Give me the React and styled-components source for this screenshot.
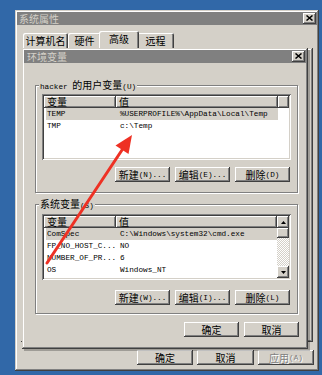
import React from "react";
import styled, { createGlobalStyle } from "styled-components";

const face = "#d4d0c8";
const cjk = `"Noto Sans CJK SC", sans-serif`;
const mono = `"Liberation Mono", "Noto Sans CJK SC", monospace`;

const raisedWindow = `
  box-shadow: inset -1px -1px #404040, inset 1px 1px ${face},
    inset -2px -2px #808080, inset 2px 2px #ffffff;
`;
const raisedButton = `
  box-shadow: inset -1px -1px #404040, inset 1px 1px #ffffff,
    inset -2px -2px #808080;
`;

const GlobalStyle = createGlobalStyle`
  * { box-sizing: border-box; }
  html, body { margin: 0; padding: 0; }
  body {
    background: #3168a8;
    width: 322px;
    height: 375px;
    overflow: hidden;
    font-family: ${mono};
  }
`;

const Desktop = styled.div`
  position: relative;
  width: 322px;
  height: 375px;
  padding: 10px 3px 4px 15px;
`;

const Window = styled.div`
  width: 304px;
  height: 361px;
  background: ${face};
  padding: 2px;
  ${raisedWindow}
  display: flex;
  flex-direction: column;
`;

const TitleBar = styled.div`
  flex-shrink: 0;
  height: 13px;
  background: #808080;
  display: flex;
  align-items: center;
  justify-content: space-between;
  padding: 0 ${(p) => p.$padRight || 1}px 0 ${(p) => p.$padLeft || 2}px;
`;

const Title = styled.span`
  font-family: ${cjk};
  font-size: 10px;
  line-height: 13px;
  color: ${face};
`;

const CloseBtn = styled.div`
  width: 13px;
  height: 11px;
  background: ${face};
  ${raisedButton}
  display: flex;
  align-items: center;
  justify-content: center;
  padding: 0 1px 1px 0;
`;

const TabStrip = styled.div`
  flex-shrink: 0;
  display: flex;
  align-items: flex-end;
  height: 17px;
  margin-top: 6px;
  padding-left: 6px;
  position: relative;
  z-index: 1;
`;

const Tab = styled.div`
  width: ${(p) => (p.$active ? p.$w + 4 : p.$w)}px;
  height: ${(p) => (p.$active ? 18 : 15)}px;
  margin: 0 ${(p) => (p.$active ? -2 : 0)}px
    ${(p) => (p.$active ? -1 : 0)}px;
  position: relative;
  z-index: ${(p) => (p.$active ? 2 : 1)};
  background: ${face};
  border-radius: 2px 2px 0 0;
  box-shadow: inset 1px 1px #ffffff, inset -1px 0 #404040,
    inset -2px 0 #808080;
  font-family: ${cjk};
  font-size: 10px;
  line-height: 15px;
  text-align: center;
  color: #000;
`;

const TabPanel = styled.div`
  flex: 1;
  margin: 0 4px;
  background: ${face};
  ${raisedWindow}
`;

const ButtonRow = styled.div`
  flex-shrink: 0;
  display: flex;
  justify-content: flex-end;
  gap: ${(p) => p.$gap || 5}px;
  margin: ${(p) => p.$margin || "0"};
`;

const Button = styled.button`
  width: ${(p) => p.$w || 55}px;
  height: 15px;
  border: none;
  padding: 0;
  background: ${face};
  ${raisedButton}
  display: flex;
  align-items: center;
  justify-content: center;
  font-family: ${mono};
  font-size: 7.7px;
  color: ${(p) => (p.$disabled ? "#808080" : "#000")};
  text-shadow: ${(p) => (p.$disabled ? "1px 1px #ffffff" : "none")};
`;

const Zh = styled.span`
  font-family: ${cjk};
  font-size: 10px;
  line-height: 10px;
`;

const EnvDialog = styled.div`
  position: absolute;
  left: 22px;
  top: 48px;
  width: 286px;
  height: 301px;
  background: ${face};
  padding: 2px;
  box-shadow: inset -1px -1px #404040, inset 1px 1px ${face},
    inset -2px -2px #808080, inset 2px 2px #ffffff,
    2px 2px 0 rgba(0, 0, 0, 0.25);
  display: flex;
  flex-direction: column;
  z-index: 5;
`;

const Group = styled.div`
  flex-shrink: 0;
  display: flex;
  flex-direction: column;
  margin: ${(p) => p.$top}px 8px 0 11px;
  padding: 0 6px ${(p) => p.$bottom}px;
  border: 1px solid #808080;
  box-shadow: inset 1px 1px #ffffff, 1px 1px #ffffff;
`;

const GroupLabel = styled.div`
  align-self: flex-start;
  height: 11px;
  margin: -6px 0 0 -3px;
  padding: 0 1px;
  background: ${face};
  font-family: ${mono};
  font-size: 7.7px;
  line-height: 11px;
  white-space: nowrap;
`;

const ListBox = styled.div`
  height: 66px;
  margin: ${(p) => p.$top}px 0 ${(p) => p.$bottom}px;
  background: #ffffff;
  padding: 2px;
  box-shadow: inset 1px 1px #808080, inset -1px -1px #ffffff,
    inset 2px 2px #404040, inset -2px -2px ${face};
  display: flex;
`;

const ListBody = styled.div`
  flex: 1;
  min-width: 0;
  display: flex;
  flex-direction: column;
`;

const HeaderRow = styled.div`
  display: flex;
  height: 12px;
`;

const HeaderCell = styled.div`
  width: ${(p) => (p.$w ? `${p.$w}px` : "auto")};
  flex: ${(p) => (p.$w ? "none" : 1)};
  display: flex;
  align-items: center;
  background: ${face};
  ${raisedButton}
  padding-left: 3px;
  white-space: nowrap;
`;

const Row = styled.div`
  display: flex;
  width: 232px;
  height: 12px;
  margin-left: 2px;
  background: ${(p) => (p.$selected ? face : "transparent")};
  font-family: ${mono};
  font-size: 7.7px;
  line-height: 12px;
  color: #000;
  white-space: nowrap;
`;

const Cell = styled.div`
  width: ${(p) => (p.$w ? `${p.$w}px` : "auto")};
  flex: ${(p) => (p.$w ? "none" : 1)};
  padding-left: ${(p) => p.$pad}px;
  overflow: hidden;
`;

const ScrollBar = styled.div`
  width: 12px;
  display: flex;
  flex-direction: column;
  background: repeating-conic-gradient(#ffffff 0 25%, ${face} 0 50%) 0 0 /
    2px 2px;
`;

const ScrollBtn = styled.div`
  height: ${(p) => p.$h || 12}px;
  background: ${face};
  ${raisedButton}
  display: flex;
  align-items: center;
  justify-content: center;
`;

const Track = styled.div`
  flex: 1;
`;

const Overlay = styled.svg`
  position: absolute;
  left: 0;
  top: 0;
  pointer-events: none;
  z-index: 10;
`;

const CloseGlyph = () => (
  <svg width="7" height="6" viewBox="0 0 7 6">
    <path d="M0.5 0.5 L6.5 5.5 M6.5 0.5 L0.5 5.5" stroke="#000" strokeWidth="1.5" />
  </svg>
);

const Arrow = ({ up }) => (
  <svg width="5" height="3" viewBox="0 0 5 3">
    <path d={up ? "M2.5 0 L5 3 L0 3 Z" : "M0 0 L5 0 L2.5 3 Z"} fill="#000" />
  </svg>
);

const userVars = [
  ["TEMP", "%USERPROFILE%\\AppData\\Local\\Temp"],
  ["TMP", "c:\\Temp"],
];

const systemVars = [
  ["ComSpec", "C:\\Windows\\system32\\cmd.exe"],
  ["FP_NO_HOST_C...", "NO"],
  ["NUMBER_OF_PR...", "6"],
  ["OS", "Windows_NT"],
];

const VarList = ({ rows, scroll, top, bottom }) => (
  <ListBox $top={top} $bottom={bottom}>
    <ListBody>
      <HeaderRow>
        <HeaderCell $w={72}>
          <Zh>变量</Zh>
        </HeaderCell>
        <HeaderCell $w={scroll ? 0 : 162}>
          <Zh>值</Zh>
        </HeaderCell>
        {!scroll && <HeaderCell />}
      </HeaderRow>
      {rows.map(([name, value], i) => (
        <Row key={name} $selected={i === 0}>
          <Cell $w={70} $pad={1}>
            {name}
          </Cell>
          <Cell $pad={4}>{value}</Cell>
        </Row>
      ))}
    </ListBody>
    {scroll && (
      <ScrollBar>
        <ScrollBtn>
          <Arrow up />
        </ScrollBtn>
        <ScrollBtn $h={10} />
        <Track />
        <ScrollBtn>
          <Arrow />
        </ScrollBtn>
      </ScrollBar>
    )}
  </ListBox>
);

const EditButtons = ({ keys }) => (
  <ButtonRow $margin="0 1px 0 0">
    <Button>
      <Zh>新建</Zh>({keys[0]})...
    </Button>
    <Button>
      <Zh>编辑</Zh>({keys[1]})...
    </Button>
    <Button>
      <Zh>删除</Zh>({keys[2]})
    </Button>
  </ButtonRow>
);

export default function App() {
  return (
    <Desktop>
      <GlobalStyle />
      <Window>
        <TitleBar>
          <Title>系统属性</Title>
          <CloseBtn>
            <CloseGlyph />
          </CloseBtn>
        </TitleBar>
        <TabStrip>
          <Tab $w={45}>计算机名</Tab>
          <Tab $w={33}>硬件</Tab>
          <Tab $w={36} $active>
            高级
          </Tab>
          <Tab $w={37}>远程</Tab>
        </TabStrip>
        <TabPanel />
        <ButtonRow $gap={4} $margin="8px 3px 4px 0">
          <Button $w={56}>
            <Zh>确定</Zh>
          </Button>
          <Button $w={57}>
            <Zh>取消</Zh>
          </Button>
          <Button $w={56} $disabled>
            <Zh>应用</Zh>(A)
          </Button>
        </ButtonRow>
      </Window>

      <EnvDialog>
        <TitleBar $padLeft={3} $padRight={0}>
          <Title>环境变量</Title>
          <CloseBtn>
            <CloseGlyph />
          </CloseBtn>
        </TitleBar>

        <Group $top={22} $bottom={10}>
          <GroupLabel>
            hacker <Zh>的用户变量</Zh>(U)
          </GroupLabel>
          <VarList rows={userVars} top={3} bottom={7} />
          <EditButtons keys={["N", "E", "D"]} />
        </Group>

        <Group $top={11} $bottom={8}>
          <GroupLabel>
            <Zh>系统变量</Zh>(S)
          </GroupLabel>
          <VarList rows={systemVars} scroll top={4} bottom={10} />
          <EditButtons keys={["W", "I", "L"]} />
        </Group>

        <ButtonRow $margin="8px 7px 0 0">
          <Button>
            <Zh>确定</Zh>
          </Button>
          <Button>
            <Zh>取消</Zh>
          </Button>
        </ButtonRow>
      </EnvDialog>

      <Overlay width="322" height="375" viewBox="0 0 322 375">
        <line x1="47" y1="263" x2="124" y2="147" stroke="#ee3124" strokeWidth="3" strokeLinecap="round" />
        <path d="M132 135 L115.5 145.5 L128.5 154 Z" fill="#ee3124" />
      </Overlay>
    </Desktop>
  );
}
